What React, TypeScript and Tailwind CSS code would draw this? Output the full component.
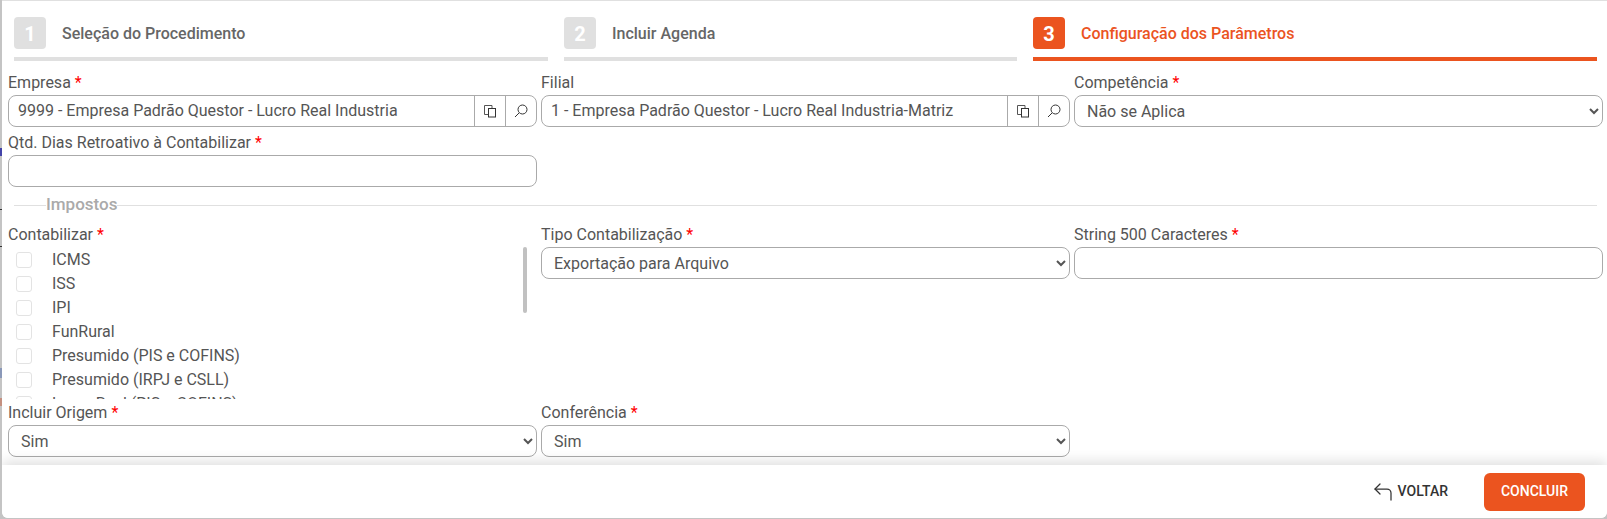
import React from 'react';
import { CornerUpLeft } from 'lucide-react';

const font = { fontFamily: 'Roboto, sans-serif' };

const taxes = [
  'ICMS',
  'ISS',
  'IPI',
  'FunRural',
  'Presumido (PIS e COFINS)',
  'Presumido (IRPJ e CSLL)',
  'Lucro Real (PIS e COFINS)',
];

function Label({ text, required = true }: { text: string; required?: boolean }) {
  return (
    <label className="flex h-[26px] items-center pt-[2px] text-[16px] leading-[22px] text-[#555]">
      {text}
      {required && <span className="ml-[4px] text-[#f00]">*</span>}
    </label>
  );
}

function CopyIcon() {
  return (
    <svg width="16" height="16" viewBox="0 0 16 16" fill="none" stroke="#333" strokeWidth="1">
      <path d="M6 11.5H2.5V2.5H10V5" stroke="#555" />
      <rect x="6.5" y="5.5" width="7" height="8.5" />
    </svg>
  );
}

function SearchIcon() {
  return (
    <svg width="16" height="16" viewBox="0 0 16 16" fill="none" stroke="#333" strokeWidth="1">
      <circle cx="9.5" cy="6.5" r="4.5" />
      <path d="M6 10L2 14" />
    </svg>
  );
}

function LookupField({ label, value, required }: { label: string; value: string; required?: boolean }) {
  return (
    <div>
      <Label text={label} required={required} />
      <div className="flex h-[32px] items-stretch rounded-[8px] border border-[#aaa] bg-white text-[16px] text-[#555]">
        <div className="flex flex-1 items-center pl-[9px]">{value}</div>
        <button className="flex w-[31px] items-center justify-center border-l border-[#aaa]">
          <CopyIcon />
        </button>
        <button className="flex w-[31px] items-center justify-center border-l border-[#aaa]">
          <SearchIcon />
        </button>
      </div>
    </div>
  );
}

function SelectField({ label, value }: { label: string; value: string }) {
  return (
    <div>
      <Label text={label} />
      <select
        defaultValue={value}
        className="h-[32px] w-full rounded-[8px] border border-[#aaa] bg-white pl-[8px] text-[16px] text-[#555]"
        style={font}
      >
        <option>{value}</option>
      </select>
    </div>
  );
}

function TextField({ label }: { label: string }) {
  return (
    <div>
      <Label text={label} />
      <input className="block h-[32px] w-full rounded-[8px] border border-[#aaa] bg-white" />
    </div>
  );
}

function Step({ n, title, active, width }: { n: number; title: string; active?: boolean; width: string }) {
  return (
    <div className={width}>
      <div className="flex h-[32px] items-center">
        <span
          className={`flex h-[32px] w-[32px] items-center justify-center rounded-[4px] pt-[1px] text-[20px] font-bold text-white ${
            active ? 'bg-[#eb541f]' : 'bg-[#e0e0e0]'
          }`}
        >
          {n}
        </span>
        <span className={`ml-[16px] pt-[2px] text-[16px] font-medium ${active ? 'text-[#eb541f]' : 'text-[#666]'}`}>
          {title}
        </span>
      </div>
      <div className={`mt-[8px] h-[4px] ${active ? 'bg-[#eb541f]' : 'bg-[#e0e0e0]'}`} />
    </div>
  );
}

export default function App() {
  return (
    <div className="relative h-[519px] w-[1607px] overflow-hidden bg-[#c4c4c4] pb-[1px] pl-[2px]" style={font}>
      {/* bits of the page behind the modal */}
      <span className="absolute left-0 top-[148px] h-[8px] w-[2px] bg-[#4343a8]" />
      <span className="absolute left-0 top-[209px] h-px w-[2px] bg-[#333]" />
      <span className="absolute left-0 top-[246px] h-px w-[2px] bg-[#333]" />
      <span className="absolute left-0 top-[368px] h-[10px] w-[2px] bg-[#8a98b8]" />
      <span className="absolute left-0 top-[398px] h-[8px] w-[2px] bg-[#c49080]" />

      <div className="flex h-full flex-col overflow-hidden rounded-b-[6px] border-t border-[#e0e0e0] bg-white">
        <div className="flex gap-[16px] pl-[12px] pt-[16px]">
          <Step n={1} title="Seleção do Procedimento" width="w-[534px]" />
          <Step n={2} title="Incluir Agenda" width="w-[453px]" />
          <Step n={3} title="Configuração dos Parâmetros" active width="w-[564px]" />
        </div>

        <div className="flex-1 px-[6px] pr-[4px] pt-[8px]">
          <div className="grid grid-cols-3 gap-x-[4px]">
            <LookupField label="Empresa" value="9999 - Empresa Padrão Questor - Lucro Real Industria" required />
            <LookupField label="Filial" value="1 - Empresa Padrão Questor - Lucro Real Industria-Matriz" required={false} />
            <SelectField label="Competência" value="Não se Aplica" />
            <div className="mt-[2px]">
              <TextField label="Qtd. Dias Retroativo à Contabilizar" />
            </div>
          </div>

          <div className="mt-[7px] flex h-[22px] items-center pl-[6px] pr-[6px]">
            <div className="h-px w-[32px] bg-[#e0e0e0]" />
            <span className="text-[17px] font-medium text-[#aaa]">Impostos</span>
            <div className="h-px flex-1 bg-[#e0e0e0]" />
          </div>

          <div className="mt-[5px] grid grid-cols-3 gap-x-[4px]">
            <div>
              <Label text="Contabilizar" />
              <div className="relative h-[152px] overflow-hidden pt-[1px]">
                {taxes.map((t) => (
                  <div key={t} className="flex h-[24px] items-center pl-[8px] text-[16px] text-[#555]">
                    <span className="h-[16px] w-[16px] rounded-[3px] border border-[#e3e3e3] bg-white" />
                    <span className="ml-[20px]">{t}</span>
                  </div>
                ))}
                <div className="absolute right-[10px] top-0 h-[66px] w-[4px] rounded-full bg-[#c1c1c1]" />
              </div>
            </div>
            <SelectField label="Tipo Contabilização" value="Exportação para Arquivo" />
            <TextField label="String 500 Caracteres" />
          </div>

          <div className="grid grid-cols-3 gap-x-[4px]">
            <SelectField label="Incluir Origem" value="Sim" />
            <SelectField label="Conferência" value="Sim" />
          </div>
        </div>

        <div className="flex h-[53px] items-center justify-end bg-white pr-[22px] shadow-[0_-4px_12px_rgba(0,0,0,0.12)]">
          <button className="flex items-center text-[14px] font-medium text-[#333]">
            <CornerUpLeft size={24} strokeWidth={1.25} className="mr-[3px]" />
            VOLTAR
          </button>
          <button className="ml-[36px] h-[38px] w-[101px] rounded-[6px] bg-[#eb541f] text-[14px] font-medium text-white">
            CONCLUIR
          </button>
        </div>
      </div>
    </div>
  );
}
